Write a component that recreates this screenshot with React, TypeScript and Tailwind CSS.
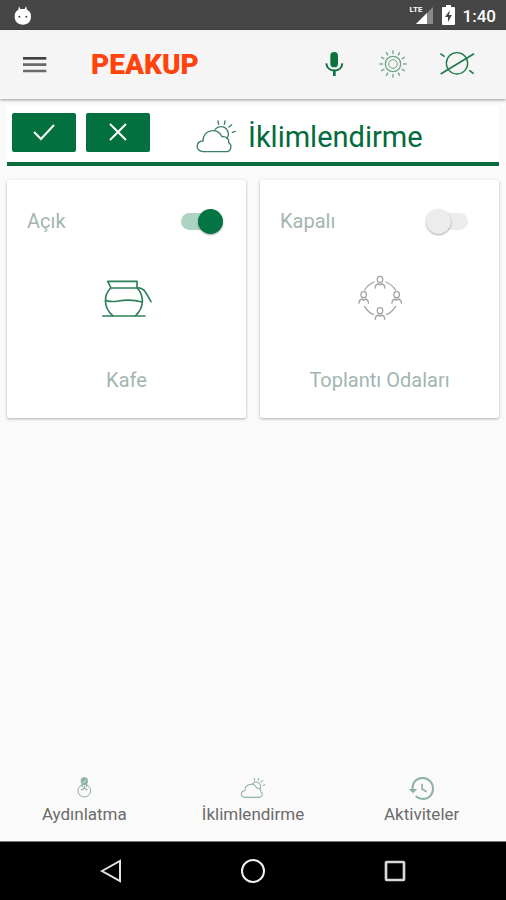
import React, { useState } from "react";

const CloudSun = ({ className }: { className: string }) => (
  <svg
    viewBox="584 55 126 105"
    className={className}
    fill="none"
    stroke="currentColor"
    strokeLinecap="round"
    strokeLinejoin="round"
    aria-hidden="true"
  >
    <path d="M607 153C585 150 585 122 608 121C606 87 654 78 665 108C678 106 687 114 685 126C696 133 693 153 677 153Z" />
    <path d="M644 88C652 74 673 75 681 89C686 99 684 108 679 113" />
    <path d="M653 61l2 10M674 61l-2 10M694 72l-8 7M705 92l-9 3" />
  </svg>
);

const CoffeePot = () => (
  <svg
    viewBox="60 50 159 129"
    className="w-[53px] h-[43px] text-[#2f8059]"
    fill="none"
    stroke="currentColor"
    strokeWidth="5"
    strokeLinecap="round"
    strokeLinejoin="round"
    aria-hidden="true"
  >
    <path d="M93 83L83 63H171V83M92 83H172" />
    <path d="M92 83C72 103 68 140 98 166M172 83C193 108 193 140 167 166" />
    <path d="M78 121C90 124 100 125 115 122C140 118 165 119 186 125" />
    <path d="M172 83C192 80 198 98 213 124M68 167H195" />
  </svg>
);

const people = [
  { x: 150, y: 58 },
  { x: 101, y: 104 },
  { x: 200, y: 104 },
  { x: 150, y: 152 },
];

const MeetingRoom = () => (
  <svg
    viewBox="78 42 144 147"
    className="w-12 h-[49px] text-[#a6a6a6]"
    fill="none"
    stroke="currentColor"
    strokeWidth="4"
    strokeLinecap="round"
    aria-hidden="true"
  >
    {people.map(({ x, y }) => (
      <g key={`${x}-${y}`} transform={`translate(${x} ${y})`}>
        <rect x="-8" y="-9" width="16" height="18" rx="7" />
        <path d="M-14 26V22C-13 16 -8 14 -4 13L0 17L4 13C8 14 13 16 14 22V26" />
      </g>
    ))}
    <path d="M104 90C110 80 120 71 132 66M168 66C180 71 190 80 197 90M104 139C110 150 119 159 131 164M169 164C181 159 190 150 197 139" />
  </svg>
);

const rays = [0, 30, 60, 90, 120, 150, 180, 210, 240, 270, 300, 330];

const Sun = () => (
  <svg
    viewBox="-45 -45 90 90"
    className="w-[30px] h-[30px]"
    fill="none"
    stroke="currentColor"
    strokeWidth="4"
    aria-hidden="true"
  >
    <circle r="23" />
    <circle r="13" strokeWidth="3" />
    {rays.map((deg) => (
      <path key={deg} d="M0 -30V-41" transform={`rotate(${deg})`} />
    ))}
  </svg>
);

const SunOff = () => (
  <svg
    viewBox="554 144 117 81"
    className="w-[39px] h-[27px]"
    fill="none"
    stroke="currentColor"
    strokeWidth="5"
    aria-hidden="true"
  >
    <circle cx="611" cy="184" r="32" strokeWidth="4" />
    <path d="M562 216L662 155M561 155l13 9M648 205l13 10" />
  </svg>
);

const Mic = () => (
  <svg
    viewBox="214 149 60 84"
    className="w-5 h-7"
    fill="none"
    stroke="currentColor"
    strokeWidth="6"
    aria-hidden="true"
  >
    <rect x="233" y="155" width="23" height="46" rx="11" fill="currentColor" stroke="none" />
    <path d="M221 189C223 218 267 218 269 189" />
    <path d="M245 211V227" strokeWidth="8" />
  </svg>
);

const Bulb = () => (
  <svg
    viewBox="140 34 51 66"
    className="w-[17px] h-[22px]"
    fill="none"
    stroke="currentColor"
    strokeWidth="4"
    aria-hidden="true"
  >
    <circle cx="165" cy="75" r="19" strokeWidth="3" />
    <circle cx="165" cy="46" r="9" fill="currentColor" />
    <path d="M160 47l4 4l7 -9" stroke="#fff" strokeWidth="2" />
    <path d="M158 56V64M172 56V64M165 60V69M156 74L165 67L174 74" />
  </svg>
);

const History = () => (
  <svg
    viewBox="657 30 81 75"
    className="w-[27px] h-[25px]"
    fill="none"
    stroke="currentColor"
    strokeWidth="6"
    aria-hidden="true"
  >
    <path d="M671 70C669 49 683 36 701 36C719 36 732 50 732 68C732 86 719 99 701 99C692 99 686 96 680 91" />
    <path d="M659 69H685L672 82Z" fill="currentColor" stroke="none" />
    <path d="M699 53V69L713 77" strokeWidth="5" />
  </svg>
);

const StatusBar = () => (
  <div className="flex items-center h-[30px] pl-3.5 pr-2.5 bg-[#464646] text-white">
    <svg viewBox="42 14 54 57" className="w-[18px] h-[19px]" aria-hidden="true">
      <path
        d="M57 15L61 23H74L78 15L81 25C90 29 93 36 93 45C93 62 83 70 69 70C54 70 44 62 44 45C44 36 47 29 55 25Z"
        fill="#fff"
      />
      <circle cx="58" cy="46" r="3" fill="#464646" />
      <circle cx="79" cy="46" r="3" fill="#464646" />
    </svg>
    <div className="flex items-center ml-auto">
      <div className="relative w-6 h-5">
        <svg viewBox="0 0 24 20" className="w-6 h-5" aria-hidden="true">
          <path d="M23 2V19H6Z" fill="#8a8a8a" />
          <path d="M17 8V19H6Z" fill="#fff" />
        </svg>
        <span className="absolute left-0 top-0 text-[8px] leading-[10px] font-bold">
          LTE
        </span>
      </div>
      <svg viewBox="0 0 13 20" className="w-[13px] h-5 ml-2" aria-hidden="true">
        <path d="M4 0H9V2H12Q13 2 13 3V19Q13 20 12 20H1Q0 20 0 19V3Q0 2 1 2H4Z" fill="#fff" />
        <path d="M8 5L3 12H6V17L10 10H7Z" fill="#464646" />
      </svg>
      <span className="ml-2 pt-0.5 text-[17px] leading-5 font-medium">1:40</span>
    </div>
  </div>
);

const Header = () => (
  <header className="relative flex items-center h-[69px] px-[23px] bg-[#f5f5f5] shadow-[0_1px_3px_rgba(0,0,0,0.4)]">
    <button aria-label="Menü">
      <svg viewBox="0 0 72 54" className="w-6 h-[18px]" aria-hidden="true">
        <path d="M0 7H70" stroke="#3f3f3f" strokeWidth="8" />
        <path d="M0 26H70M0 45H70" stroke="#6a6a6a" strokeWidth="8" />
      </svg>
    </button>
    <span className="ml-11 text-[28px] leading-8 font-black text-[#ff430a]">PEAKUP</span>
    <div className="flex items-center ml-auto mr-1.5 pb-0.5 text-[#1f7a4c]">
      <button aria-label="Sesli komut" className="text-[#0b7340]">
        <Mic />
      </button>
      <button aria-label="Hepsini aç" className="ml-[34px] text-[#6fa489]">
        <Sun />
      </button>
      <button aria-label="Hepsini kapat" className="ml-[30px]">
        <SunOff />
      </button>
    </div>
  </header>
);

const DeviceCard = ({
  name,
  initialOn,
  children,
}: {
  name: string;
  initialOn: boolean;
  children: React.ReactNode;
}) => {
  const [on, setOn] = useState(initialOn);

  return (
    <section className="flex flex-col items-center h-[238px] rounded-xs bg-white shadow-[0_1px_3px_rgba(0,0,0,0.3)]">
      <label className="flex items-center justify-between w-full pl-5 pr-[23px] pt-[27px] text-[#a3b5b0]">
        <span className="text-xl leading-7">{on ? "Açık" : "Kapalı"}</span>
        <input
          type="checkbox"
          role="switch"
          aria-label={name}
          checked={on}
          onChange={() => setOn(!on)}
          className="relative appearance-none w-[50px] h-[25px] before:absolute before:inset-x-2 before:inset-y-1 before:rounded-full before:bg-[#ececec] checked:before:bg-[#afd3c2] after:absolute after:left-0 after:top-0 after:size-[25px] after:rounded-full after:bg-[#ececec] after:shadow-[0_1px_2px_rgba(0,0,0,0.35)] checked:after:left-[25px] checked:after:bg-[#037443]"
        />
      </label>
      <div className="flex items-center justify-center h-[127px]">{children}</div>
      <h2 className="pt-1 text-xl leading-7 text-[#a3b5b0]">{name}</h2>
    </section>
  );
};

const tabs = [
  { label: "Aydınlatma", icon: <Bulb /> },
  {
    label: "İklimlendirme",
    icon: <CloudSun className="w-[26px] h-[22px] stroke-5" />,
  },
  { label: "Aktiviteler", icon: <History /> },
];

const App = () => {
  return (
    <div className="flex flex-col min-h-screen bg-[#fafafa] font-[Roboto,sans-serif]">
      <StatusBar />
      <Header />

      <main className="flex-1 px-[7px] pt-[7px]">
        <div className="flex items-center h-[60px] pl-[5px] pb-1 bg-white border-b-4 border-[#0a6b3c] text-[#036b3c]">
          <div className="flex gap-2.5 text-white">
            <button
              aria-label="Onayla"
              className="flex items-center justify-center w-16 h-[39px] rounded-xs bg-[#037040]"
            >
              <svg viewBox="0 0 24 20" className="w-6 h-5" fill="none" stroke="#fff" strokeWidth="2" aria-hidden="true">
                <path d="M2 10L9 17L22 3" />
              </svg>
            </button>
            <button
              aria-label="İptal"
              className="flex items-center justify-center w-16 h-[39px] rounded-xs bg-[#037040]"
            >
              <svg viewBox="0 0 20 20" className="size-5" fill="none" stroke="#fff" strokeWidth="2" aria-hidden="true">
                <path d="M2 2L18 18M18 2L2 18" />
              </svg>
            </button>
          </div>
          <div className="flex items-center ml-[45px] pt-2">
            <CloudSun className="w-[42px] h-[35px] stroke-4 text-[#3c8160]" />
            <h1 className="ml-[11px] pt-0.5 text-[29px] leading-9">İklimlendirme</h1>
          </div>
        </div>

        <div className="grid grid-cols-2 gap-3.5 mt-3.5">
          <DeviceCard name="Kafe" initialOn={true}>
            <CoffeePot />
          </DeviceCard>
          <DeviceCard name="Toplantı Odaları" initialOn={false}>
            <MeetingRoom />
          </DeviceCard>
        </div>
      </main>

      <nav className="grid grid-cols-3 pb-[15px]">
        {tabs.map(({ label, icon }) => (
          <a
            key={label}
            href="#"
            className="flex flex-col items-center text-[17px] leading-6 text-[#6b6b6b]"
          >
            <span className="flex items-center justify-center h-7 text-[#8fb0a4]">{icon}</span>
            {label}
          </a>
        ))}
      </nav>

      <div className="grid grid-cols-3 items-center justify-items-center h-[59px] px-10 bg-black border-t border-[#777]">
        <button aria-label="Geri">
          <svg viewBox="0 0 24 24" className="size-6" fill="none" stroke="#e4e4e4" strokeWidth="2" aria-hidden="true">
            <path d="M3 12L21 2V22Z" />
          </svg>
        </button>
        <button aria-label="Ana ekran">
          <svg viewBox="0 0 24 24" className="size-6" fill="none" stroke="#f0f0f0" strokeWidth="2" aria-hidden="true">
            <circle cx="12" cy="12" r="11" />
          </svg>
        </button>
        <button aria-label="Son uygulamalar">
          <svg viewBox="0 0 72 72" className="size-6" fill="none" stroke="#d8d8d8" strokeWidth="8" aria-hidden="true">
            <rect x="9" y="9" width="54" height="54" rx="2" />
          </svg>
        </button>
      </div>
    </div>
  );
};

export default App;
